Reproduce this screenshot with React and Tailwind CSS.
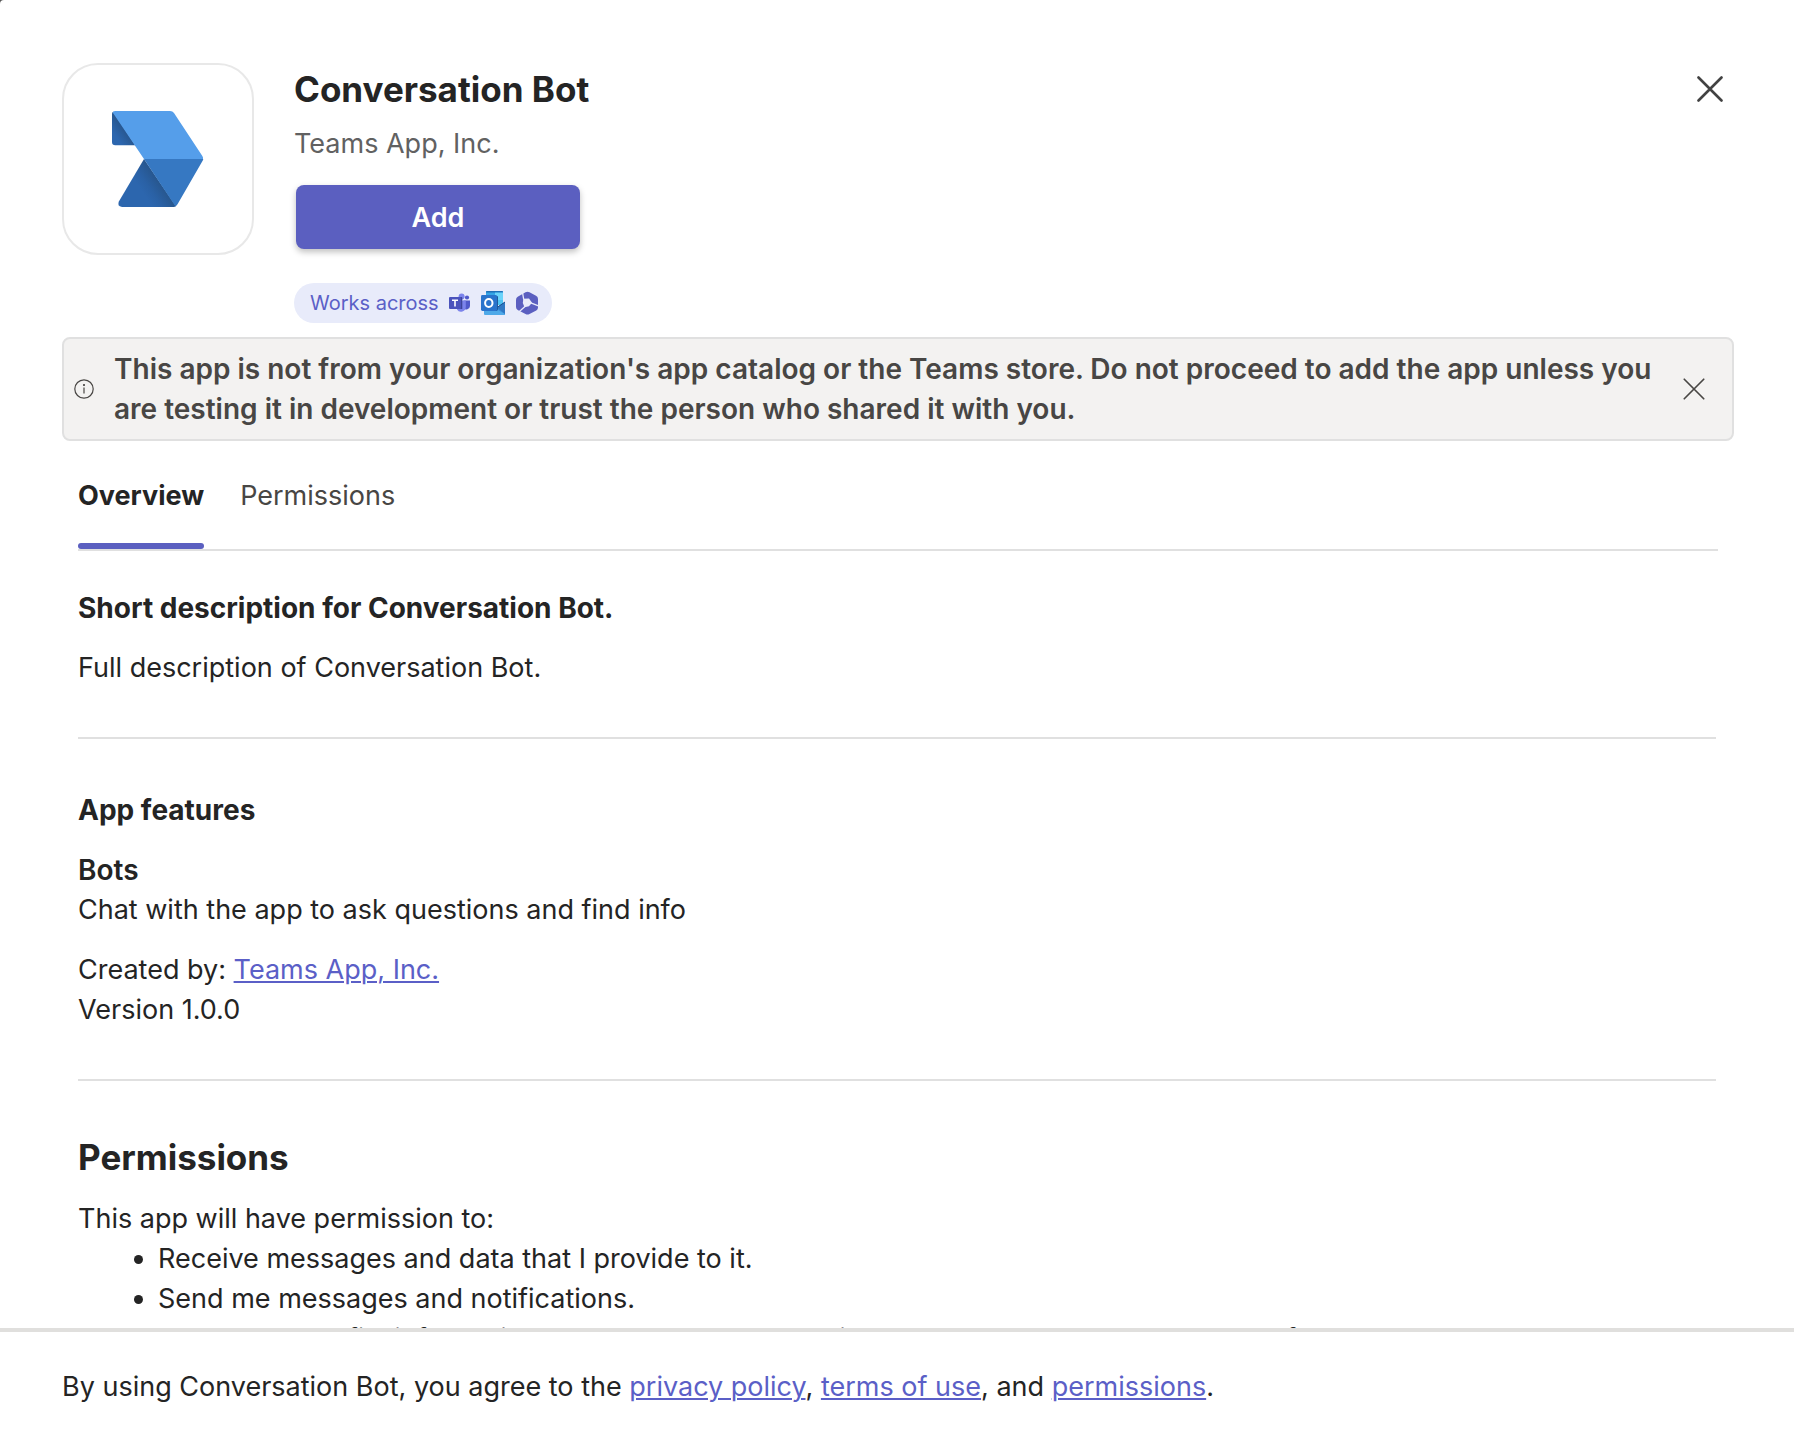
import { useState } from "react";

function CloseIcon({ className, strokeWidth }) {
  return (
    <svg className={className} viewBox="0 0 26 26" fill="none" stroke="currentColor" strokeWidth={strokeWidth} strokeLinecap="round" aria-hidden="true">
      <path d="M1.5 1.5 24.5 24.5M24.5 1.5 1.5 24.5" />
    </svg>
  );
}

function BotLogo() {
  return (
    <svg className="h-24 w-[92px]" viewBox="217 213 274 288" aria-hidden="true">
      <defs>
        <linearGradient id="flap" gradientUnits="userSpaceOnUse" x1="228" y1="290" x2="258" y2="268">
          <stop offset="0" stopColor="#2c66ae" />
          <stop offset="1" stopColor="#27558c" />
        </linearGradient>
        <linearGradient id="fold" gradientUnits="userSpaceOnUse" x1="310" y1="460" x2="360" y2="426">
          <stop offset="0" stopColor="#2c66ae" />
          <stop offset="0.4" stopColor="#2a61a5" />
          <stop offset="1" stopColor="#27568d" />
        </linearGradient>
      </defs>
      <path d="M216 222Q216 216 220 215L286 316H226Q216 316 216 306Z" fill="url(#flap)" />
      <path d="M312 357 408 499 402 501H246Q230 499 237 484Z" fill="url(#fold)" />
      <path d="M312 357H490Q489 361 487 364L413 492Q410 497 406 499Z" fill="#3678c2" />
      <path d="M219 219Q217 213 226 213H390Q398 213 402 219L487 348Q490 352 489 357H312Z" fill="#559eea" />
    </svg>
  );
}

function TeamsIcon() {
  return (
    <svg className="h-5 w-[22px]" viewBox="0 0 22 20" aria-hidden="true">
      <circle cx="18" cy="4.5" r="2.1" fill="#5059c9" />
      <path d="M14.5 7.5H21v5.4a3.6 3.6 0 0 1-6.5 2Z" fill="#5059c9" />
      <circle cx="12.6" cy="3.6" r="3" fill="#7b83eb" />
      <path d="M8 7.5h8.8v6.2a4.8 4.8 0 0 1-8.8 2.8Z" fill="#7b83eb" />
      <path d="M8 4h4.3q1 0 1 1v11H8Z" fill="#3c4399" />
      <rect y="4" width="12" height="12" rx="1" fill="#4b53bc" />
      <path d="M3 7.2h6M6 7.2v6.2" stroke="#fff" strokeWidth="1.6" />
    </svg>
  );
}

function OutlookIcon() {
  return (
    <svg className="h-6 w-6" viewBox="0 0 24 24" aria-hidden="true">
      <path d="M5 1q0-1 1-1h15q1 0 1 1v12H5Z" fill="#35a5e6" />
      <path d="M5 1q0-1 1-1h15q1 0 1 1v.6H5Z" fill="#1f70b8" />
      <path d="M14 1.600h8v10.400h-8Z" fill="#6bd3fa" />
      <path d="M14 9h8v5h-8Z" fill="#50c3f3" />
      <path d="M24 11 13 18v6h10q1 0 1-1Z" fill="#3b8edb" />
      <path d="M3 11 24 23q-.3 1-1 1H4q-1 0-1-1Z" fill="#4fa9e8" />
      <path d="M24 11v12l-8-6.500Z" fill="#2f78c4" />
      <path d="M24 11 16 16.500" stroke="#1b4f8c" strokeWidth="1" />
      <path d="M15 5h1q1 0 1 1v12q0 2-2 2H4V5Z" fill="#1f5a9c" />
      <rect y="4" width="16" height="16" rx="1.4" fill="#2a74cc" />
      <ellipse cx="7.8" cy="12" rx="3.7" ry="4" fill="none" stroke="#fff" strokeWidth="2" />
    </svg>
  );
}

function Microsoft365Icon() {
  return (
    <svg className="h-6 w-6" viewBox="0 0 24 24" aria-hidden="true">
      <path d="M10.500 1.200Q12.500.2 14.500 1.200L21 4.700Q23 5.800 23 8V16.500Q23 18.500 21.300 19.400L14.500 23.100Q12.500 24.100 10.500 23.100L2.700 18.900Q1 17.900 1 16V9Q1 6.800 2.700 5.700Z" fill="#5b5fc0" />
      <path d="M8.300 7.800 14 7.500 17 11.800 14 15.200 9.500 16.200 7.800 12Z" fill="#e8ebfa" />
      <path d="M7.600 2 8.700 8.400M15.800 11.800 23.500 14.800M10.500 15 3.800 21" fill="none" stroke="#e8ebfa" strokeWidth="1.300" />
    </svg>
  );
}

const link = "text-[#5b5fc7] underline decoration-2 underline-offset-2";

export default function App() {
  const [banner, setBanner] = useState(true);
  return (
    <div className="h-screen bg-[#555]">
      <div role="dialog" aria-label="Conversation Bot" className="flex h-full flex-col rounded-tl-[4px] bg-white font-['Inter',sans-serif] text-[27px] leading-10 text-[#242424]">
        <main className="min-h-0 flex-1 overflow-hidden px-[62px] pt-[63px]">
          <header className="flex items-start">
            <div className="flex size-48 shrink-0 items-center justify-center rounded-[36px] border-2 border-[#e8e8e8]">
              <BotLogo />
            </div>
            <div className="ml-10 flex-1">
              <h1 className="mt-[2px] text-[35px] leading-12 font-bold">Conversation Bot</h1>
              <p className="mt-[11px] text-[#616161]">Teams App, Inc.</p>
              <button type="button" className="mt-[21px] ml-[2px] block h-16 w-[284px] rounded-lg bg-[#5b5fc0] pt-[2px] font-semibold text-white shadow-[0_3px_6px_rgba(0,0,0,0.25)]">Add</button>
              <div className="mt-[34px] flex h-10 w-fit items-center rounded-full bg-[#e8ebfa] pr-[13px] pl-4 text-[20px] text-[#5b5fc7]">
                <span className="mr-[10px]">Works across</span>
                <span className="flex items-center gap-[10px]">
                  <TeamsIcon />
                  <OutlookIcon />
                  <Microsoft365Icon />
                </span>
              </div>
            </div>
            <button type="button" aria-label="Close" className="mt-[13px] mr-[9px] text-[#424242]">
              <CloseIcon className="size-[26px]" strokeWidth={2.6} />
            </button>
          </header>

          {banner && (
            <div role="status" className="mt-[14px] -mr-[2px] flex items-center rounded-lg border-2 border-[#e0e0e0] bg-[#f3f2f1] py-[10px] pr-[27px] pl-[10px] text-[28px] text-[#484644]">
              <svg className="size-5 shrink-0" viewBox="0 0 20 20" fill="none" stroke="currentColor" strokeWidth="1.200" aria-hidden="true">
                <circle cx="10" cy="10" r="9.200" />
                <path d="M10 8.500v6" />
                <circle cx="10" cy="6" r="0.500" fill="currentColor" />
              </svg>
              <p className="ml-5 flex-1 pr-6 font-semibold">
                This app is not from your organization's app catalog or the Teams store. Do not proceed to add the app unless you are testing it in development or trust the person who shared it with you.
              </p>
              <button type="button" aria-label="Dismiss" onClick={() => setBanner(false)}>
                <CloseIcon className="size-[22px]" strokeWidth={2} />
              </button>
            </div>
          )}

          <div className="px-4">
            <div role="tablist" className="mt-[35px] -mr-[2px] flex gap-9 border-b-2 border-[#e0e0e0]">
              <button type="button" role="tab" aria-selected="true" className="font-bold">
                Overview
                <span className="mt-[27px] block h-[6px] rounded-sm bg-[#5b5fc0]" />
              </button>
              <button type="button" role="tab" aria-selected="false" className="self-start text-[#484644]">Permissions</button>
            </div>

            <section className="mt-[37px] border-b-2 border-[#e0e0e0] pb-[49px]">
              <h2 className="text-[28px] font-bold">Short description for Conversation Bot.</h2>
              <p className="mt-5">Full description of Conversation Bot.</p>
            </section>

            <section className="mt-[51px] border-b-2 border-[#e0e0e0] pb-[49px]">
              <h2 className="text-[28px] font-bold">App features</h2>
              <h3 className="mt-5 text-[28px] font-semibold">Bots</h3>
              <p>Chat with the app to ask questions and find info</p>
              <p className="mt-5">
                Created by: <a href="#publisher" className={link}>Teams App, Inc.</a>
              </p>
              <p>Version 1.0.0</p>
            </section>

            <section className="mt-[52px]">
              <h2 className="text-[35px] leading-12 font-bold">Permissions</h2>
              <p className="mt-[18px]">This app will have permission to:</p>
              <ul className="list-disc pl-20">
                <li>Receive messages and data that I provide to it.</li>
                <li>Send me messages and notifications.</li>
                <li>Access my profile information such as my name, email address, company name, and preferred language.</li>
              </ul>
            </section>
          </div>
        </main>

        <footer className="border-t-4 border-[#e0dfdd] px-[62px] pt-[35px] pb-[29px]">
          By using Conversation Bot, you agree to the <a href="#privacy" className={link}>privacy policy</a>, <a href="#terms" className={link}>terms of use</a>, and <a href="#permissions" className={link}>permissions</a>.
        </footer>
      </div>
    </div>
  );
}
